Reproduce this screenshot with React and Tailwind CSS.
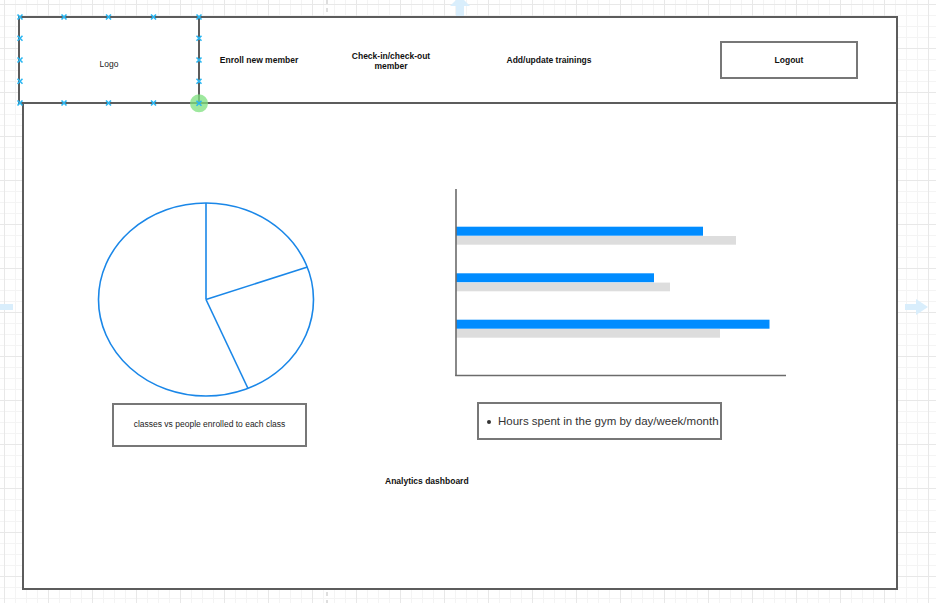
import React from "react";

const handlePts = [
  [20, 17], [64, 17], [108.5, 17], [153.5, 17], [199, 17],
  [20, 38.3], [20, 60], [20, 81.3],
  [199, 38.3], [199, 60], [199, 81.3],
  [20, 103], [64, 103], [108.5, 103], [153.5, 103],
];

function Overlay() {
  return (
    <svg className="absolute left-0 top-0 pointer-events-none" width="936" height="603">
      {handlePts.map(([x, y], i) => (
        <g key={i} stroke="#29b6f2" strokeWidth="1.6">
          <line x1={x - 2.5} y1={y - 2.5} x2={x + 2.5} y2={y + 2.5} />
          <line x1={x - 2.5} y1={y + 2.5} x2={x + 2.5} y2={y - 2.5} />
        </g>
      ))}
      <circle cx="199" cy="103.3" r="9" fill="#7ee07e" fillOpacity="0.75" />
      <g stroke="#29b6f2" strokeWidth="1.6">
        <line x1="196.5" y1="100.8" x2="201.5" y2="105.8" />
        <line x1="196.5" y1="105.8" x2="201.5" y2="100.8" />
      </g>
    </svg>
  );
}

function Background() {
  return (
    <svg className="absolute left-0 top-0" width="936" height="603">
      <line x1="327" y1="0" x2="327" y2="603" stroke="#c8c8c8" strokeWidth="1.2" strokeDasharray="4 4" />
      <g fill="#d9eefc">
        <rect x="456" y="4" width="8" height="14" />
        <polygon points="450,6 460,-4 470,6" />
        <rect x="0" y="304" width="13" height="6" />
        <rect x="905" y="304" width="13" height="6" />
        <polygon points="916,299 928,307 916,315" />
      </g>
    </svg>
  );
}

function Pie() {
  return (
    <svg width="220" height="197" viewBox="96 201 220 197" className="block">
      <g fill="none" stroke="#1a87e8" strokeWidth="1.6">
        <ellipse cx="206" cy="299.5" rx="107.5" ry="96.5" fill="white" />
        <line x1="206" y1="299.5" x2="206" y2="203" />
        <line x1="206" y1="299.5" x2="307.5" y2="267" />
        <line x1="206" y1="299.5" x2="248" y2="388.5" />
      </g>
    </svg>
  );
}

function Bars() {
  const rows = [
    { y: 41.7, blue: 253, gray: 286 },
    { y: 88.3, blue: 204, gray: 220 },
    { y: 134.7, blue: 319.5, gray: 270 },
  ];
  return (
    <svg width="340" height="195" className="block">
      {rows.map((r, i) => (
        <g key={i}>
          <rect x="6" y={r.y} width={r.blue - 6} height="9" fill="#008cff" />
          <rect x="6" y={r.y + 9.3} width={r.gray - 6} height="8.7" fill="#dddddd" />
        </g>
      ))}
      <line x1="6" y1="4" x2="6" y2="191" stroke="#6b6b6b" strokeWidth="1.6" />
      <line x1="5.2" y1="190.5" x2="336" y2="190.5" stroke="#6b6b6b" strokeWidth="1.6" />
    </svg>
  );
}

export default function App() {
  return (
    <div
      className="relative w-[936px] h-[603px] overflow-hidden bg-white [background-image:linear-gradient(#e8e8e8_1px,transparent_1px),linear-gradient(90deg,#e8e8e8_1px,transparent_1px),linear-gradient(#f4f4f4_1px,transparent_1px),linear-gradient(90deg,#f4f4f4_1px,transparent_1px)] [background-size:44px_44px,44px_44px,11px_11px,11px_11px] [background-position:4px_4px,4px_4px,4px_4px,4px_4px]"
      style={{ fontFamily: '"Liberation Sans", Arial, sans-serif' }}
    >
      <Background />
      <div className="relative pt-[16px] pl-[18px]">
        <header className="w-[880px] h-[88px] border-2 border-[#5c5c5c] bg-white flex items-stretch">
          <div className="w-[180px] border-r-2 border-[#5c5c5c] flex items-center justify-center">
            <span className="text-[8.5px] text-[#222] mt-[8px]">Logo</span>
          </div>
          <div className="w-[118px] flex items-center justify-center">
            <span className="text-[8.5px] font-bold text-[#111]">Enroll new member</span>
          </div>
          <div className="w-[146px] flex items-center justify-center">
            <span className="text-[8.5px] leading-[10px] font-bold text-[#111] text-center mt-[1px]">
              Check-in/check-out
              <br />
              member
            </span>
          </div>
          <div className="w-[170px] flex items-center justify-center">
            <span className="text-[8.5px] font-bold text-[#111]">Add/update trainings</span>
          </div>
          <div className="ml-[86px] mt-[23px] w-[138px] h-[38px] border-2 border-[#777] flex items-center justify-center">
            <span className="text-[8.5px] font-bold text-[#111]">Logout</span>
          </div>
        </header>

        <main className="ml-[4px] -mt-[2px] w-[876px] h-[488px] border-2 border-[#5c5c5c] bg-white">
          <div className="flex items-start">
            <div className="ml-[72px] mt-[97px] w-[220px] flex flex-col">
              <Pie />
              <div className="ml-[16px] mt-[5px] w-[195px] h-[44px] border-2 border-[#777] flex items-center justify-center">
                <span className="text-[8.5px] text-[#222] -mt-[1px]">classes vs people enrolled to each class</span>
              </div>
            </div>
            <div className="ml-[134px] mt-[81px] w-[340px] flex flex-col">
              <Bars />
              <div className="ml-[27px] mt-[22px] w-[245px] h-[38px] border-2 border-[#777] flex items-center pl-[8px]">
                <span className="text-[11.5px] text-[#333] flex items-center mt-[1px]">
                  <span className="inline-block w-[4px] h-[4px] rounded-full bg-[#333] mr-[7px]" />
                  Hours spent in the gym by day/week/month
                </span>
              </div>
            </div>
          </div>
          <div className="mt-[20px] pl-[361px]">
            <span className="text-[8.5px] font-bold text-[#111]">Analytics dashboard</span>
          </div>
        </main>
      </div>
      <Overlay />
    </div>
  );
}
